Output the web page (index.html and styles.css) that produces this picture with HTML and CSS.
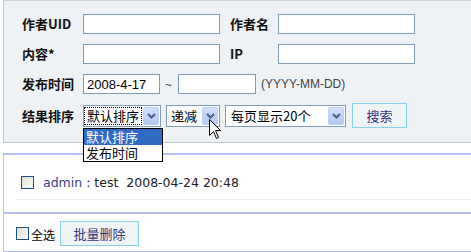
FILE: index.html
```html
<!DOCTYPE html>
<html lang="zh-CN">
<head>
    <meta charset="UTF-8">
    <title>评论管理</title>
    <link rel="stylesheet" href="styles.css">
</head>
<body>
<div class="search">
    <div class="row">
        <span class="lbl">作者UID</span>
        <input class="txt wide" type="text">
        <span class="lbl lbl2">作者名</span>
        <input class="txt wide" type="text">
    </div>
    <div class="row">
        <span class="lbl">内容*</span>
        <input class="txt wide" type="text">
        <span class="lbl lbl2">IP</span>
        <input class="txt wide" type="text">
    </div>
    <div class="row">
        <span class="lbl">发布时间</span>
        <input class="txt date" type="text" value="2008-4-17">
        <span class="tilde">~</span>
        <input class="txt date2" type="text">
        <span class="hint">(YYYY-MM-DD)</span>
    </div>
    <div class="row row4">
        <span class="lbl">结果排序</span>
        <div class="sel sel1">
            <span class="val"><span class="focus">默认排序</span></span>
            <span class="arr"><svg width="9" height="6" viewBox="0 0 9 6"><path d="M1 1 L4.5 4.5 L8 1" fill="none" stroke="#4a5f88" stroke-width="2"/></svg></span>
            <ul class="drop">
                <li class="on">默认排序</li>
                <li>发布时间</li>
            </ul>
        </div>
        <div class="sel sel2">
            <span class="val">递减</span>
            <span class="arr"><svg width="9" height="6" viewBox="0 0 9 6"><path d="M1 1 L4.5 4.5 L8 1" fill="none" stroke="#4a5f88" stroke-width="2"/></svg></span>
            <svg class="cursor" width="13" height="21" viewBox="0 0 13 21"><path d="M0.5 0.5 L0.5 16.5 L4.5 12.5 L7.5 19.5 L9.5 18.5 L6.5 11.5 L11.5 11.5 Z" fill="#fff" stroke="#000" stroke-width="1"/></svg>
        </div>
        <div class="sel sel3">
            <span class="val">每页显示20个</span>
            <span class="arr"><svg width="9" height="6" viewBox="0 0 9 6"><path d="M1 1 L4.5 4.5 L8 1" fill="none" stroke="#4a5f88" stroke-width="2"/></svg></span>
        </div>
        <button class="btn btn-search">搜索</button>
    </div>
</div>

<div class="list">
    <div class="item">
        <input class="chk" type="checkbox">
        <a class="user" href="#">admin</a><span class="msg"> : test&nbsp; 2008-04-24 20:48</span>
    </div>
</div>
<div class="foot">
    <input class="chk" type="checkbox">
    <span class="all">全选</span>
    <button class="btn btn-del">批量删除</button>
</div>
</body>
</html>
```
FILE: styles.css
```css
*{
    margin: 0;
    padding: 0;
    list-style: none;
    box-sizing: border-box;
}
body{
    width: 471px;
    overflow: hidden;
    background: #fff;
    font-family: "Noto Sans CJK SC", sans-serif;
    font-size: 13px;
    color: #111;
}
.search{
    margin-left: 3px;
    height: 143px;
    padding: 8px 0 0 18px;
    background: #eef2f5;
    border: 1px solid #c6c6c6;
    border-right: none;
    border-top-color: #cfd3d6;
}
.row{
    display: flex;
    align-items: center;
    height: 30px;
}
.row4{
    height: 33px;
}
.lbl{
    width: 61px;
    font-weight: bold;
    font-size: 13px;
    line-height: 16px;
}
.lbl2{
    width: 48px;
    margin-left: 10px;
}
.txt{
    height: 20px;
    border: 1px solid #7f9db9;
    background: #fff;
    padding: 0 3px;
    font-family: "Liberation Sans", sans-serif;
    font-size: 13px;
    color: #000;
    outline: none;
}
.wide{
    width: 137px;
}
.date{
    width: 77px;
}
.date2{
    width: 78px;
}
.tilde{
    margin: 2px 6px 0 5px;
    font-family: "Liberation Sans", sans-serif;
    font-size: 12px;
    color: #444;
}
.hint{
    margin-left: 5px;
    font-family: "Liberation Sans", sans-serif;
    font-size: 12px;
    color: #444;
}
.sel{
    position: relative;
    display: flex;
    align-items: center;
    height: 22px;
    border: 1px solid #7f9db9;
    background: #fff;
    margin-right: 5px;
}
.sel1{
    width: 78px;
}
.sel2{
    width: 54px;
}
.sel3{
    width: 121px;
    margin-right: 6px;
}
.val{
    flex: 1;
    padding-left: 4px;
    font-size: 13px;
    line-height: 16px;
    color: #000;
    white-space: nowrap;
}
.sel3 .val{
    padding-left: 5px;
}
.focus{
    display: inline-block;
    margin-left: -3px;
    padding: 0 2px;
    outline: 1px dotted #000;
}
.arr{
    display: flex;
    align-items: center;
    justify-content: center;
    width: 16px;
    height: 18px;
    margin-right: 1px;
    border: 1px solid #bccdf5;
    border-radius: 2px;
    background: linear-gradient(#d2e0fd, #b3c7f5);
}
.drop{
    position: absolute;
    top: 22px;
    left: -1px;
    width: 80px;
    border: 1px solid #000;
    background: #fff;
    z-index: 2;
}
.drop li{
    height: 16px;
    padding-left: 2px;
    font-size: 13px;
    line-height: 16px;
    color: #000;
}
.drop .on{
    background: #316ac5;
    color: #fff;
}
.cursor{
    position: absolute;
    left: 42px;
    top: 13px;
    z-index: 3;
}
.btn{
    height: 25px;
    border: 1px solid #86d2e8;
    background: #eef3f3;
    font-family: "Noto Sans CJK SC", sans-serif;
    font-size: 13px;
    color: #35357f;
}
.btn-search{
    width: 55px;
}
.list{
    margin-top: 10px;
    margin-left: 3px;
    padding-bottom: 12px;
    border-top: 2px solid #b5bff4;
    border-left: 1px solid #b5bff4;
}
.item{
    display: flex;
    align-items: center;
    margin-left: 12px;
    padding: 20px 5px 9px;
    border-bottom: 1px solid #ececec;
    font-family: "DejaVu Sans", sans-serif;
    font-size: 12.5px;
    line-height: 15px;
}
.chk{
    appearance: none;
    width: 13px;
    height: 13px;
    border: 1px solid #1c5180;
    background: linear-gradient(135deg, #dcdcd5, #fbfbf9);
}
.item .chk{
    margin-right: 9px;
}
.user{
    color: #3b3b8c;
    text-decoration: none;
}
.msg{
    color: #222;
    white-space: pre;
}
.foot{
    display: flex;
    align-items: center;
    margin-left: 3px;
    height: 40px;
    padding: 1px 0 0 12px;
    border-top: 2px solid #b5bff4;
    border-left: 1px solid #b5bff4;
    border-bottom: 1px solid #b5bff4;
}
.all{
    margin: 2px 5px 0 2px;
    font-size: 12px;
    color: #000;
}
.btn-del{
    width: 79px;
}
```
